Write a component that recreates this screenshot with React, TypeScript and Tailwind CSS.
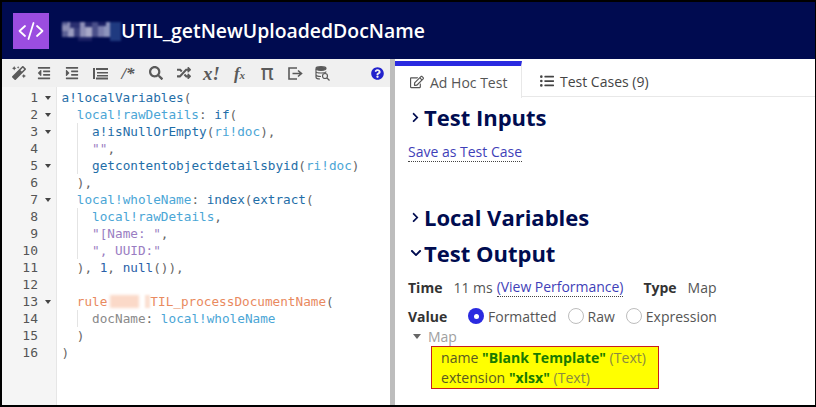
import { FaMagic, FaOutdent, FaIndent, FaSearch, FaRandom, FaQuestionCircle, FaRegEdit, FaListUl, FaChevronRight, FaChevronDown } from "react-icons/fa";

type Tok = [string, string];
const A = "text-[#1f6ea8]", L = "text-[#4ba6d6]", P = "text-[#666666]", S = "text-[#9a7dc2]", O = "text-[#e98a5f]", D = "text-[#8a8a8a]", N = "text-[#2a5fa8]";

const lines: { n: number; fold?: boolean; depth: number; toks: Tok[] }[] = [
  { n: 1, fold: true, depth: 0, toks: [[A, "a!localVariables"], [P, "("]] },
  { n: 2, fold: true, depth: 1, toks: [[L, "local!rawDetails"], [P, ": "], [A, "if"], [P, "("]] },
  { n: 3, fold: true, depth: 2, toks: [[A, "a!isNullOrEmpty"], [P, "("], [L, "ri!doc"], [P, "),"]] },
  { n: 4, depth: 2, toks: [[S, '""'], [P, ","]] },
  { n: 5, fold: true, depth: 2, toks: [[A, "getcontentobjectdetailsbyid"], [P, "("], [L, "ri!doc"], [P, ")"]] },
  { n: 6, depth: 1, toks: [[P, "),"]] },
  { n: 7, fold: true, depth: 1, toks: [[L, "local!wholeName"], [P, ": "], [A, "index"], [P, "("], [A, "extract"], [P, "("]] },
  { n: 8, depth: 2, toks: [[L, "local!rawDetails"], [P, ","]] },
  { n: 9, depth: 2, toks: [[S, '"[Name: "'], [P, ","]] },
  { n: 10, depth: 2, toks: [[S, '", UUID:"']] },
  { n: 11, depth: 1, toks: [[P, "), "], [N, "1"], [P, ", "], [N, "null"], [P, "()),"]] },
  { n: 12, depth: 0, toks: [] },
  { n: 13, fold: true, depth: 1, toks: [[O, "rule"], ["blur", ""], [O, "TIL_processDocumentName"], [P, "("]] },
  { n: 14, depth: 2, toks: [[D, "docName"], [P, ": "], [L, "local!wholeName"]] },
  { n: 15, depth: 1, toks: [[P, ")"]] },
  { n: 16, depth: 0, toks: [[P, ")"]] },
];

function Mosaic() {
  const cols = ["#5b6095", "#9a9cc0", "#3a3f7c", "#8f90b8", "#a9a9c8", "#4a4f8a", "#7a7eae", "#8d94bd", "#2f4a8a", "#3f5c9c"];
  return (
    <svg width="59" height="24" viewBox="0 0 59 24" className="shrink-0 blur-[1px]">
      {cols.map((c, i) => <rect key={i} x={i * 6} y={3} width="6" height="15" fill={c} />)}
      <rect x="0" y="6" width="8" height="6" fill="#8b8db4" />
      <rect x="8" y="3" width="10" height="6" fill="#2a2f70" />
      <rect x="23" y="3" width="7" height="5" fill="#23286a" />
      <rect x="36" y="3" width="8" height="4" fill="#1a2064" />
      <rect x="16" y="18" width="14" height="4" fill="#1c2266" />
      <rect x="48" y="3" width="11" height="19" fill="#1f3a80" />
    </svg>
  );
}

function Tb({ children, w }: { children: React.ReactNode; w: string }) {
  return <span className={`flex items-center justify-center text-[#5a5a5a] ${w}`}>{children}</span>;
}

function Heading({ open, children, cls }: { open?: boolean; children: React.ReactNode; cls: string }) {
  return (
    <div className={`flex items-center text-[#000c50] font-bold text-[22px] leading-[30px] ${cls}`}>
      <span className="w-[16px] flex justify-start pl-[2px]">
        {open ? <FaChevronDown size={12} /> : <FaChevronRight size={11} />}
      </span>
      {children}
    </div>
  );
}

function Radio({ on, label, cls }: { on?: boolean; label: string; cls: string }) {
  return (
    <span className={`flex items-center gap-[4px] ${cls}`}>
      {on ? (
        <span className="w-[16px] h-[16px] rounded-full bg-[#2a2ae0] flex items-center justify-center">
          <span className="w-[5px] h-[5px] rounded-full bg-white" />
        </span>
      ) : (
        <span className="w-[16px] h-[16px] rounded-full border border-[#bdbdbd] bg-white" />
      )}
      {label}
    </span>
  );
}

export default function App() {
  return (
    <div className="w-[816px] h-[407px] border-2 border-r border-black bg-white flex flex-col overflow-hidden font-['Open_Sans',sans-serif]">
      <header className="h-[57px] shrink-0 bg-[#000b50] flex items-center pl-[11px]">
        <div className="w-[36px] h-[36px] bg-[#9b4de0] flex items-center justify-center">
          <svg width="26" height="18" viewBox="0 0 26 18" fill="none" stroke="white" strokeWidth="1.8" strokeLinecap="round" strokeLinejoin="round">
            <path d="M7 4L1.5 9L7 14" />
            <path d="M19 4L24.5 9L19 14" />
            <path d="M15.5 1L10.5 17" />
          </svg>
        </div>
        <div className="ml-[13px]"><Mosaic /></div>
        <span className="ml-[0px] text-white text-[19.4px] font-semibold leading-none">UTIL_getNewUploadedDocName</span>
      </header>
      <div className="flex flex-1 min-h-0">
        <div className="w-[388px] shrink-0 flex flex-col">
          <div className="h-[28px] shrink-0 bg-[#f0f0f0] flex items-center pl-[6px] pr-[5px]">
            <Tb w="w-[22px]"><FaMagic size={14} /></Tb>
            <Tb w="w-[28px]"><FaOutdent size={14} /></Tb>
            <Tb w="w-[28px]"><FaIndent size={14} /></Tb>
            <Tb w="w-[28px]">
              <svg width="15" height="13" viewBox="0 0 15 13" fill="currentColor"><rect x="0" y="1" width="2" height="11" /><rect x="3" y="1" width="12" height="2" /><rect x="4" y="5" width="11" height="1.5" /><rect x="4" y="8" width="11" height="1.5" /><rect x="3" y="10.5" width="12" height="2" /></svg>
            </Tb>
            <Tb w="w-[28px]"><span className="text-[17px] leading-none font-bold font-['Liberation_Serif',serif] italic">/*</span></Tb>
            <Tb w="w-[28px]"><FaSearch size={14} /></Tb>
            <Tb w="w-[27px]"><FaRandom size={14} /></Tb>
            <Tb w="w-[29px]"><span className="text-[19px] leading-none font-bold italic font-['Liberation_Serif',serif]">x!</span></Tb>
            <Tb w="w-[27px]"><span className="text-[17px] leading-none font-bold italic font-['Liberation_Serif',serif]">f<span className="text-[11px]">x</span></span></Tb>
            <Tb w="w-[28px]"><span className="text-[22px] leading-none font-['DejaVu_Sans',sans-serif]">π</span></Tb>
            <Tb w="w-[28px]">
              <svg width="15" height="13" viewBox="0 0 15 13" fill="none" stroke="currentColor" strokeWidth="1.6"><path d="M9 1H1v11h8" /><path d="M4.5 6.5H13M10 3.5l3.5 3-3.5 3" /></svg>
            </Tb>
            <Tb w="w-[27px]">
              <svg width="15" height="15" viewBox="0 0 15 15" fill="none" stroke="currentColor" strokeWidth="1.2"><ellipse cx="6" cy="2.5" rx="5" ry="1.8" fill="currentColor" /><path d="M1 5.5c0 2 10 2 10 0M1 8.5c0 2 5 2 5 2M1 3v8c0 1.5 3 2 4 2" /><circle cx="10" cy="10" r="2.5" /><path d="M12 12l2.5 2.5" /></svg>
            </Tb>
            <span className="ml-auto mr-[1px] text-[#2222cc]"><FaQuestionCircle size={13} /></span>
          </div>
          <div className="flex-1 flex min-h-0 font-['DejaVu_Sans_Mono',monospace] text-[12.7px] leading-[17px]">
            <div className="w-[55px] shrink-0 bg-[#f5f5f5] border-r border-[#e6e6e6] pt-[2px] text-[#555555] text-[13px]">
              {lines.map((l) => (
                <div key={l.n} className="h-[17px] flex items-center justify-end pr-[5px]">
                  {l.n}
                  <span className="w-[13px] flex justify-end">
                    {l.fold && <span className="w-0 h-0 border-l-[3px] border-r-[3px] border-t-[4px] border-l-transparent border-r-transparent border-t-[#444444]" />}
                  </span>
                </div>
              ))}
            </div>
            <div className="flex-1 pt-[2px] pl-[4.5px] whitespace-pre">
              {lines.map((l) => (
                <div key={l.n} className="h-[17px] flex">
                  {l.depth >= 1 && <span className="w-[15.3px] shrink-0" />}
                  {l.depth >= 2 && <span className="w-[15.3px] shrink-0 border-l border-[#e4e4e4]" />}
                  {l.toks.map(([c, t], i) =>
                    c === "blur" ? (
                      <span key={i} className="w-[43px] h-[13px] mt-[2px] flex">
                        <span className="ml-[3px] w-[29px] bg-[#fbd9c8] blur-[1.5px]" />
                        <span className="ml-[6px] w-[5px] bg-[#fbe0d2] blur-[1px]" />
                      </span>
                    ) : (
                      <span key={i} className={c}>{t}</span>
                    )
                  )}
                </div>
              ))}
            </div>
          </div>
        </div>
        <div className="w-[5px] shrink-0 bg-[#bdbdbd]" />
        <div className="flex-1 min-w-0 flex flex-col text-[14px] text-[#333333]">
          <div className="h-[38px] shrink-0 flex border-b border-[#e8e8e8]">
            <div className="w-[127px] border-t-[5px] mt-[2px] border-[#2a2ae0] border-r border-r-[#e8e8e8] h-[37px] bg-white flex items-center pl-[15px] gap-[6px] text-[#555555]">
              <FaRegEdit size={14} />
              <span>Ad Hoc Test</span>
            </div>
            <div className="flex items-center pl-[18px] gap-[6px] mt-[7px] text-[#444444]">
              <FaListUl size={14} />
              <span>Test Cases (9)</span>
            </div>
          </div>
          <div className="pl-[13px] flex flex-col">
            <Heading cls="mt-[5px]">Test Inputs</Heading>
            <div className="mt-[9px]">
              <span className="text-[#3f3fb8] border-b border-dotted border-[#444444] leading-[19px] inline-block">Save as Test Case</span>
            </div>
            <Heading cls="mt-[40px]">Local Variables</Heading>
            <Heading open cls="mt-[6px]">Test Output</Heading>
            <div className="flex items-center mt-[9px] h-[20px]">
              <b className="font-bold text-[#333333]">Time</b>
              <span className="ml-[11px] text-[#555555]">11 ms</span>
              <span className="ml-[4px] text-[#3f3fb8] border-b border-dotted border-[#444444] leading-[18px] tracking-[-0.03px]">(View Performance)</span>
              <b className="ml-[20px] font-bold text-[#333333]">Type</b>
              <span className="ml-[11px] text-[#555555]">Map</span>
            </div>
            <div className="flex items-center mt-[9px] h-[20px] text-[#555555]">
              <b className="font-bold text-[#333333] w-[60px]">Value</b>
              <Radio on label="Formatted" cls="" />
              <Radio label="Raw" cls="ml-[11px]" />
              <Radio label="Expression" cls="ml-[11px]" />
            </div>
            <div className="flex items-center h-[20px] pl-[5px] text-[#a0a0a0]">
              <span className="w-0 h-0 border-l-[4px] border-r-[4px] border-t-[5px] border-l-transparent border-r-transparent border-t-[#666666]" />
              <span className="ml-[7px]">Map</span>
            </div>
            <div className="ml-[23px] w-[228px] h-[43px] bg-[#ffff00] border border-[#c81e1e] pl-[9px] text-[#5a5a20] leading-[20px] pt-[1px] text-[14.1px]">
              <div>name <b className="font-bold text-[#1a7a00]">"Blank Template"</b> <span className="text-[#8a8a40]">(Text)</span></div>
              <div>extension <b className="font-bold text-[#1a7a00]">"xlsx"</b> <span className="text-[#8a8a40]">(Text)</span></div>
            </div>
          </div>
        </div>
      </div>
    </div>
  );
}
